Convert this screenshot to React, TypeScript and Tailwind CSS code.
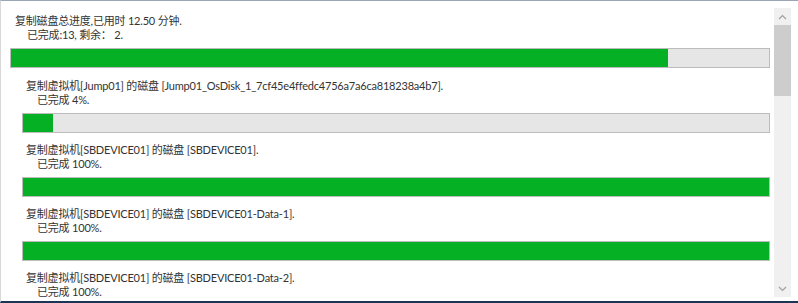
const tasks = [
  { vm: "Jump01", disk: "Jump01_OsDisk_1_7cf45e4ffedc4756a7a6ca818238a4b7", pct: 4 },
  { vm: "SBDEVICE01", disk: "SBDEVICE01", pct: 100 },
  { vm: "SBDEVICE01", disk: "SBDEVICE01-Data-1", pct: 100 },
  { vm: "SBDEVICE01", disk: "SBDEVICE01-Data-2", pct: 100 },
];

const Bar = ({ pct }: { pct: number }) => (
  <div className="h-5 border border-[#bcbcbc] bg-[#e6e6e6]">
    <div className="h-full bg-[#06b025]" style={{ width: `${pct}%` }} />
  </div>
);

const ScrollBar = () => (
  <div className="w-[17px] mt-[7px] mb-[4px] mr-[7px] flex flex-col bg-[#f0f0f0]">
    <div className="h-[17px] flex items-center justify-center">
      <svg width="9" height="6" viewBox="0 0 9 6" fill="none">
        <path d="M1 5 L4.5 1.5 L8 5" stroke="#a0a0a0" strokeWidth="1.2" />
      </svg>
    </div>
    <div className="h-[71px] bg-[#cdcdcd]" />
    <div className="flex-1" />
    <div className="h-[17px] flex items-center justify-center">
      <svg width="9" height="6" viewBox="0 0 9 6" fill="none">
        <path d="M1 1 L4.5 4.5 L8 1" stroke="#a0a0a0" strokeWidth="1.2" />
      </svg>
    </div>
  </div>
);

export default function App() {
  return (
    <div
      className="w-[798px] h-[303px] flex bg-white border-t border-t-[#9aa6b6] border-l border-l-[#d8d8d8] border-b-2 border-b-[#1b3556] overflow-hidden text-[11px] leading-[14px] tracking-[-0.2px] text-[#333333]"
      style={{ fontFamily: 'Lato, "Noto Sans CJK SC", sans-serif' }}
    >
      <div className="flex-1 overflow-hidden pl-[9px] pr-[4px] pt-[13px]">
        <div className="mb-[11px]">
          <div className="pl-[5px]">
            <div className="whitespace-nowrap">复制磁盘总进度,已用时 12.50 分钟.</div>
            <div className="pl-[12px] whitespace-nowrap">已完成:13, 剩余： 2.</div>
          </div>
          <div className="mt-[6px]">
            <Bar pct={86.67} />
          </div>
        </div>
        <div className="pl-[12px]">
          {tasks.map((t, i) => (
            <div key={i} className="mb-[10px]">
              <div className="pl-[4px]">
                <div className="whitespace-nowrap">
                  复制虚拟机[{t.vm}] 的磁盘 [{t.disk}].
                </div>
                <div className="pl-[11px] whitespace-nowrap">已完成 {t.pct}%.</div>
              </div>
              <div className="mt-[6px]">
                <Bar pct={t.pct} />
              </div>
            </div>
          ))}
        </div>
      </div>
      <ScrollBar />
    </div>
  );
}
